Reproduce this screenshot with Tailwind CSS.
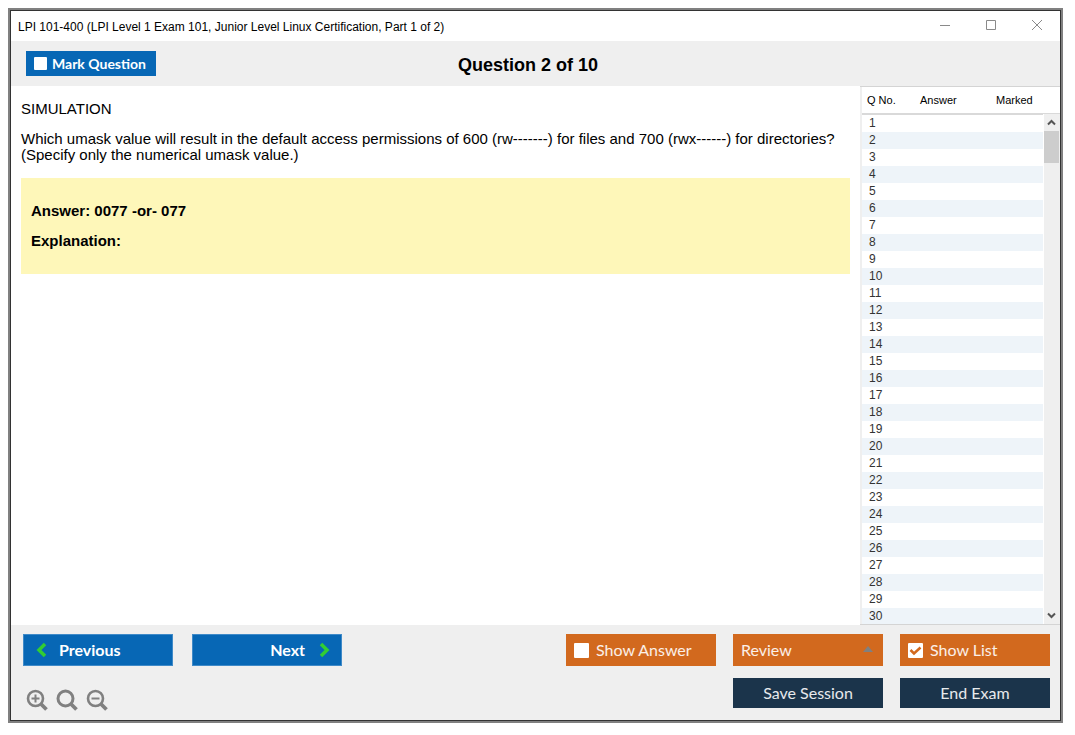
<!DOCTYPE html>
<html lang="en">
<head>
    <meta charset="UTF-8">
    <meta name="viewport" content="width=device-width, initial-scale=1.0">
    <title>LPI 101-400 Exam Simulator</title>
    <!-- Tailwind CSS CDN -->
    <script src="https://cdn.jsdelivr.net/npm/@tailwindcss/browser@4"></script>
</head>
<body class="bg-white min-h-screen flex flex-col pl-2 pt-2 pb-3 pr-3 text-black font-['Liberation_Sans',Arial,sans-serif]">

    <div class="flex-1 flex flex-col border-2 border-[#808080]">
    <div class="flex-1 flex flex-col border border-[#333333] bg-[#efefef]">

        <!-- Title bar -->
        <div class="h-[30px] bg-white flex items-center justify-between pl-[7px] pr-[17px]">
            <span class="pt-[2px] text-[12px]">LPI 101-400 (LPI Level 1 Exam 101, Junior Level Linux Certification, Part 1 of 2)</span>
            <div class="flex items-center gap-[34px] text-[#8a8a8a] pb-[2px]">
                <button aria-label="Minimize">
                    <svg class="block" width="12" height="12" viewBox="0 0 12 12" stroke="currentColor" fill="none"><path d="M1 6.500h10"/></svg>
                </button>
                <button aria-label="Maximize">
                    <svg class="block" width="12" height="12" viewBox="0 0 12 12" stroke="currentColor" fill="none"><path d="M1.500 1.500h9v9h-9z"/></svg>
                </button>
                <button aria-label="Close">
                    <svg class="block" width="12" height="12" viewBox="0 0 12 12" stroke="currentColor" fill="none"><path d="M1 1l10 10M11 1L1 11"/></svg>
                </button>
            </div>
        </div>

        <!-- Question header -->
        <header class="h-[45px] grid grid-cols-[1fr_auto_1fr] items-center pl-[15px] pr-[30px]">
            <label class="justify-self-start w-[130px] h-[25px] bg-[#0767b5] text-white flex items-center gap-[5px] pl-2 font-['Lato',sans-serif] font-bold text-[14px]">
                <input type="checkbox" class="appearance-none size-[13px] bg-white rounded-[1px]">
                Mark Question
            </label>
            <h1 class="pt-1 text-[18px] font-bold">Question 2 of 10</h1>
        </header>

        <!-- Question and question list -->
        <div class="flex-1 flex">
            <main class="flex-1 bg-white px-[10px] pt-[15px] text-[15px] leading-4">
                <p class="mb-[14px]">SIMULATION</p>
                <p>Which umask value will result in the default access permissions of 600 (rw-------) for files and 700 (rwx------) for directories?<br>(Specify only the numerical umask value.)</p>
                <div class="mt-[15px] h-24 bg-[#fef7b9] px-[10px] pt-[25px] font-bold">
                    <p class="mb-[14px]">Answer: 0077 -or- 077</p>
                    <p>Explanation:</p>
                </div>
            </main>

            <aside class="relative w-[200px] pl-[2px] bg-[#efefef] border-y border-[#d4d4d4]">
                <table class="w-full table-fixed bg-white">
                    <thead>
                        <tr class="h-[27px] border-b-2 border-[#d9d9d9] text-left text-[11px]">
                            <th class="w-[54px] pl-[5px] font-normal">Q No.</th>
                            <th class="w-[76px] pl-1 font-normal">Answer</th>
                            <th class="pl-1 font-normal">Marked</th>
                        </tr>
                    </thead>
                    <tbody id="questionRows" class="text-[12px] leading-[17px] text-[#333333]"></tbody>
                </table>
                <div class="absolute right-0 top-[27px] bottom-0 w-[17px] bg-[#efefef] border-l border-white flex flex-col">
                    <button aria-label="Scroll up" class="h-[17px] pl-[3px] text-[#555555]">
                        <svg class="block" width="9" height="9" viewBox="0 0 9 9" stroke="currentColor" stroke-width="2" fill="none"><path d="M1 6.500L4.500 3 8 6.500"/></svg>
                    </button>
                    <div class="w-[15px] h-8 bg-[#cdcdcd]"></div>
                    <button aria-label="Scroll down" class="h-[17px] mt-auto pl-[3px] text-[#555555]">
                        <svg class="block" width="9" height="9" viewBox="0 0 9 9" stroke="currentColor" stroke-width="2" fill="none"><path d="M1 2.500L4.500 6 8 2.500"/></svg>
                    </button>
                </div>
            </aside>
        </div>

        <!-- Footer controls -->
        <footer class="flex items-start justify-between pl-3 pr-[10px] pt-[9px] pb-[9px] font-['Lato',sans-serif] text-[16px] text-white">
            <div class="flex flex-col gap-[23px]">
                <div class="flex gap-[19px] font-bold">
                    <button class="w-[150px] h-8 bg-[#0767b5] border border-[#3f8ac8] flex items-center gap-3 pl-3">
                        <svg width="11" height="16" viewBox="0 0 11 16" stroke="#32cd32" stroke-width="3.500" fill="none"><path d="M9 2L3 8l6 6"/></svg>
                        Previous
                    </button>
                    <button class="w-[150px] h-8 bg-[#0767b5] border border-[#3f8ac8] flex items-center justify-end gap-[14px] pr-[11px]">
                        Next
                        <svg width="11" height="16" viewBox="0 0 11 16" stroke="#32cd32" stroke-width="3.500" fill="none"><path d="M2 2l6 6-6 6"/></svg>
                    </button>
                </div>
                <div class="flex gap-2 pl-[3px]">
                    <button aria-label="Zoom in">
                        <svg class="block" width="22" height="22" viewBox="0 0 22 22" stroke="#808080" fill="none"><circle cx="9.500" cy="9.500" r="7.500" stroke-width="2.600"/><path d="M15 15l5.500 5.500" stroke-width="3.800"/><path d="M5.500 9.500h8M9.500 5.500v8" stroke-width="2"/></svg>
                    </button>
                    <button aria-label="Reset zoom">
                        <svg class="block" width="22" height="22" viewBox="0 0 22 22" stroke="#808080" fill="none"><circle cx="9.500" cy="9.500" r="7.500" stroke-width="3"/><path d="M15 15l5.500 5.500" stroke-width="3.800"/></svg>
                    </button>
                    <button aria-label="Zoom out">
                        <svg class="block" width="22" height="22" viewBox="0 0 22 22" stroke="#808080" fill="none"><circle cx="9.500" cy="9.500" r="7.500" stroke-width="2.600"/><path d="M15 15l5.500 5.500" stroke-width="3.800"/><path d="M5.500 9.500h8" stroke-width="2"/></svg>
                    </button>
                </div>
            </div>

            <div class="grid grid-cols-[150px_150px_150px] gap-x-[17px] gap-y-3">
                <label class="h-8 bg-[#d2691e] flex items-center gap-[7px] pl-2 text-white/90">
                    <input type="checkbox" class="appearance-none size-[15px] bg-white rounded-[1px]">
                    Show Answer
                </label>
                <div class="relative">
                    <select aria-label="Review" class="appearance-none block w-full h-8 bg-[#d2691e] pl-2 text-white/90">
                        <option>Review</option>
                    </select>
                    <svg class="absolute right-[10px] top-3 pointer-events-none" width="10" height="6" viewBox="0 0 10 6" fill="#808080"><path d="M5 0l5 6H0z"/></svg>
                </div>
                <label class="h-8 bg-[#d2691e] flex items-center gap-[7px] pl-2 text-white/90">
                    <span class="relative flex">
                        <input type="checkbox" checked class="appearance-none size-[15px] bg-white rounded-[1px]">
                        <svg class="absolute inset-0 pointer-events-none" width="15" height="15" viewBox="0 0 15 15" stroke="#d2691e" stroke-width="2.500" fill="none"><path d="M2.500 7l3.500 3.500 6.500-6"/></svg>
                    </span>
                    Show List
                </label>
                <button class="col-start-2 h-[30px] bg-[#1b344b] text-white/90">Save Session</button>
                <button class="h-[30px] bg-[#1b344b] text-white/90">End Exam</button>
            </div>
        </footer>
    </div>
    </div>

    <script>
        // Fill the question list, nothing answered or marked yet
        const questionRows = document.getElementById('questionRows');
        for (let i = 1; i <= 30; i++) {
            const row = document.createElement('tr');
            row.className = 'h-[17px] even:bg-[#eef4f9] last:h-4 last:leading-4';
            row.innerHTML = `<td class="pl-[7px]">${i}</td><td></td><td></td>`;
            questionRows.appendChild(row);
        }
    </script>
</body>
</html>
